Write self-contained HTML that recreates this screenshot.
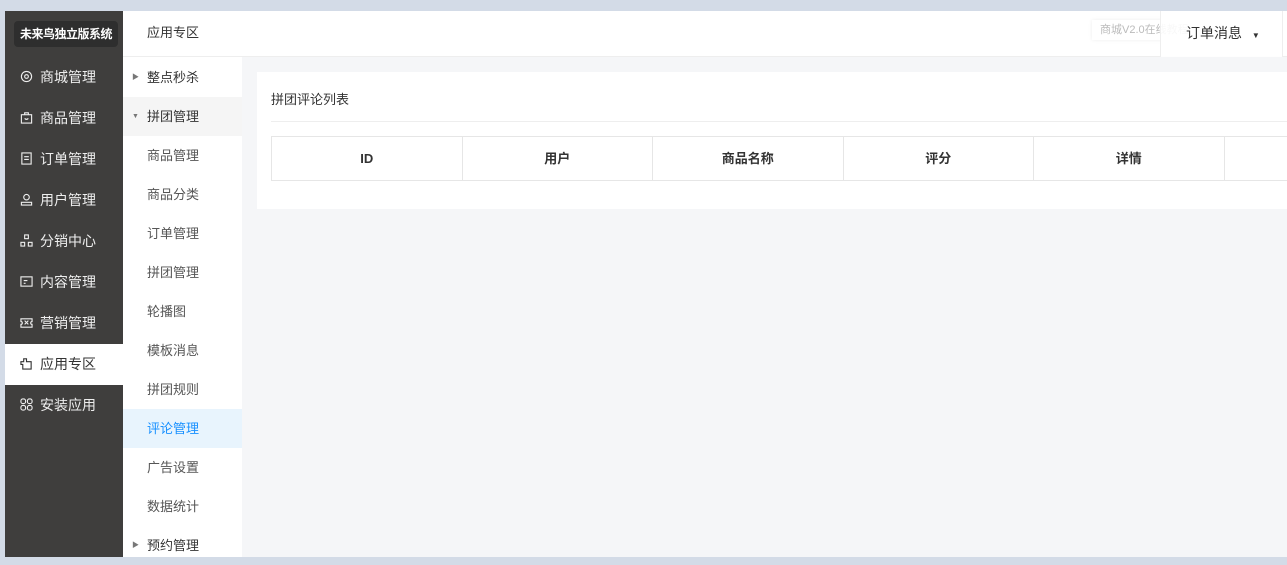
<!DOCTYPE html>
<html><head><meta charset="utf-8"><style>
*{margin:0;padding:0;box-sizing:border-box}
body{width:1287px;height:557px;overflow:hidden;background:#d3dbe7;font-family:"Liberation Sans","Noto Sans CJK SC",sans-serif;position:relative}
.side{position:absolute;left:5px;top:11px;width:118px;height:546px;background:#3f3e3d}
.logo{position:absolute;left:9px;top:10px;width:104px;height:26px;background:#2e2e2e;border-radius:4px;color:#fff;font-size:12px;font-weight:bold;line-height:26px;text-align:center;letter-spacing:-0.5px}
.mi{position:absolute;left:0;width:118px;height:41px;color:#eee;font-size:14px;line-height:41px;padding-left:15px}
.mi svg{width:13px;height:13px;vertical-align:-1px;margin-right:7px;fill:none;stroke:#eee;stroke-width:1.2}
.mi.act{background:#fff;color:#333}
.mi.act svg{stroke:#333}
.sub{position:absolute;left:123px;top:11px;width:119px;height:546px;background:#fff}
.si{position:absolute;left:0;width:119px;height:39px;line-height:39px;padding-left:24px;font-size:13px;color:#555}
.si.b{color:#333}
.tri{position:absolute;left:9px;font-size:7px;color:#777}
.main{position:absolute;left:242px;top:11px;width:1045px;height:546px;background:#f5f6f8}
.hdr{position:absolute;left:0;top:0;width:1045px;height:46px;background:#fff;border-bottom:1px solid #eee}
.card{position:absolute;left:15px;top:61px;width:1030px;height:137px;background:#fff}
.t{position:absolute;left:14px;top:17px;font-size:13px;color:#333}
.tbl{position:absolute;left:14px;top:64px;width:1030px;height:45px;border:1px solid #e6e6e6;display:flex;overflow:hidden}
.tbl div{flex:0 0 190.5px;border-right:1px solid #e6e6e6;text-align:center;line-height:43px;font-size:13px;font-weight:bold;color:#333}
</style></head><body>
<div class="side">
<div class="logo">未来鸟独立版系统</div>
<div class="mi" style="top:46px"><svg viewBox="0 0 14 14"><circle cx="7" cy="7" r="5.5"/><circle cx="7" cy="7" r="2"/></svg>商城管理</div>
<div class="mi" style="top:87px"><svg viewBox="0 0 14 14"><rect x="1.5" y="4" width="11" height="9"/><path d="M5 4V2h4v2M5 8q2 2 4 0"/></svg>商品管理</div>
<div class="mi" style="top:128px"><svg viewBox="0 0 14 14"><rect x="2" y="1" width="10" height="12"/><path d="M4.5 5h5M4.5 8h5"/></svg>订单管理</div>
<div class="mi" style="top:169px"><svg viewBox="0 0 14 14"><circle cx="7" cy="4.5" r="3"/><path d="M1.5 13v-3h11v3z"/></svg>用户管理</div>
<div class="mi" style="top:210px"><svg viewBox="0 0 14 14"><rect x="5" y="1" width="4" height="4"/><rect x="1" y="9" width="4" height="4"/><rect x="9" y="9" width="4" height="4"/></svg>分销中心</div>
<div class="mi" style="top:251px"><svg viewBox="0 0 14 14"><rect x="1" y="2" width="12" height="10"/><path d="M4 6h4M4 9h2"/></svg>内容管理</div>
<div class="mi" style="top:292px"><svg viewBox="0 0 14 14"><path d="M1 3h12v3a1.5 1.5 0 000 3v3H1V9a1.5 1.5 0 000-3z"/><path d="M5 5l4 4M9 5l-4 4"/></svg>营销管理</div>
<div class="mi act" style="top:333px"><svg viewBox="0 0 14 14"><path d="M1 5h3V2h3v3h5v8H3V8H1z"/></svg>应用专区</div>
<div class="mi" style="top:374px"><svg viewBox="0 0 14 14"><rect x="1" y="1" width="5" height="5" rx="2"/><rect x="8" y="1" width="5" height="5" rx="2"/><rect x="1" y="8" width="5" height="5" rx="2"/><rect x="8" y="8" width="5" height="5" rx="2"/></svg>安装应用</div>
</div>
<div class="sub">
<div class="si b" style="top:2px;height:44px;line-height:40px;border-bottom:1px solid #eee">应用专区</div>
<div class="si b" style="top:47px"><span class="tri">▶</span>整点秒杀</div>
<div class="si b" style="top:86px;background:#f5f5f5"><span class="tri">▼</span>拼团管理</div>
<div class="si" style="top:125px">商品管理</div>
<div class="si" style="top:164px">商品分类</div>
<div class="si" style="top:203px">订单管理</div>
<div class="si" style="top:242px">拼团管理</div>
<div class="si" style="top:281px">轮播图</div>
<div class="si" style="top:320px">模板消息</div>
<div class="si" style="top:359px">拼团规则</div>
<div class="si" style="top:398px;background:#e8f4fd;color:#1890ff">评论管理</div>
<div class="si" style="top:437px">广告设置</div>
<div class="si" style="top:476px">数据统计</div>
<div class="si b" style="top:515px"><span class="tri">▶</span>预约管理</div>
</div>
<div class="main">
<div class="hdr">
<div style="position:absolute;left:850px;top:9px;width:130px;height:20px;font-size:11px;color:#bbb;line-height:20px;padding-left:8px;box-shadow:0 0 4px #eee">商城V2.0在线教程</div>
<div style="position:absolute;left:918px;top:0;width:123px;height:46px;border-left:1px solid #eee;border-right:1px solid #eee;background:rgba(255,255,255,.9);font-size:14px;color:#333;line-height:44px;padding-left:25px">订单消息 <span style="font-size:8px;margin-left:6px">▼</span></div>
</div>
<div class="card">
<div class="t">拼团评论列表</div>
<div style="position:absolute;left:14px;top:49px;right:0;border-top:1px solid #eee"></div>
<div class="tbl"><div>ID</div><div>用户</div><div>商品名称</div><div>评分</div><div>详情</div><div></div></div>
</div>
</div>
</body></html>
